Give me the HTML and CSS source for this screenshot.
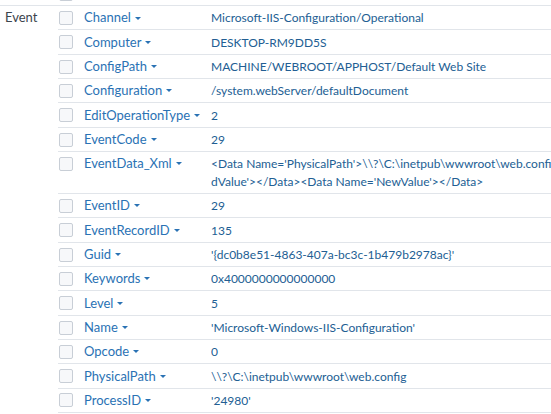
FILE: index.html
```html
<!DOCTYPE html>
<html>
<head>
<meta charset="utf-8">
<link rel="stylesheet" href="styles.css">
</head>
<body>
<div class="fields">
  <div class="group group-prev">
    <div class="group-label"></div>
    <div class="rows">
      <div class="row"><span class="cb"></span><span class="name">Keywords<i class="caret"></i></span><span class="val"></span></div>
    </div>
  </div>
  <div class="group">
    <div class="group-label">Event</div>
    <div class="rows">
      <div class="row"><span class="cb"></span><span class="name">Channel<i class="caret"></i></span><span class="val">Microsoft-IIS-Configuration/Operational</span></div>
      <div class="row"><span class="cb"></span><span class="name">Computer<i class="caret"></i></span><span class="val">DESKTOP-RM9DD5S</span></div>
      <div class="row"><span class="cb"></span><span class="name">ConfigPath<i class="caret"></i></span><span class="val">MACHINE/WEBROOT/APPHOST/Default Web Site</span></div>
      <div class="row"><span class="cb"></span><span class="name">Configuration<i class="caret"></i></span><span class="val">/system.webServer/defaultDocument</span></div>
      <div class="row"><span class="cb"></span><span class="name">EditOperationType<i class="caret"></i></span><span class="val">2</span></div>
      <div class="row"><span class="cb"></span><span class="name">EventCode<i class="caret"></i></span><span class="val">29</span></div>
      <div class="row"><span class="cb"></span><span class="name">EventData_Xml<i class="caret"></i></span><span class="val val-wrap"><span class="line">&lt;Data Name='PhysicalPath'&gt;\\?\C:\inetpub\wwwroot\web.config&lt;/Data&gt;&lt;Data Name='ConfigPath'&gt;MACHINE/WEBROOT/APPHOST/Default Web Site&lt;/Data&gt;&lt;Data Name='Ol</span><span class="line">dValue'&gt;&lt;/Data&gt;&lt;Data Name='NewValue'&gt;&lt;/Data&gt;</span></span></div>
      <div class="row"><span class="cb"></span><span class="name">EventID<i class="caret"></i></span><span class="val">29</span></div>
      <div class="row"><span class="cb"></span><span class="name">EventRecordID<i class="caret"></i></span><span class="val">135</span></div>
      <div class="row"><span class="cb"></span><span class="name">Guid<i class="caret"></i></span><span class="val">'{dc0b8e51-4863-407a-bc3c-1b479b2978ac}'</span></div>
      <div class="row"><span class="cb"></span><span class="name">Keywords<i class="caret"></i></span><span class="val">0x4000000000000000</span></div>
      <div class="row"><span class="cb"></span><span class="name">Level<i class="caret"></i></span><span class="val">5</span></div>
      <div class="row"><span class="cb"></span><span class="name">Name<i class="caret"></i></span><span class="val">'Microsoft-Windows-IIS-Configuration'</span></div>
      <div class="row"><span class="cb"></span><span class="name">Opcode<i class="caret"></i></span><span class="val">0</span></div>
      <div class="row"><span class="cb"></span><span class="name">PhysicalPath<i class="caret"></i></span><span class="val">\\?\C:\inetpub\wwwroot\web.config</span></div>
      <div class="row"><span class="cb"></span><span class="name">ProcessID<i class="caret"></i></span><span class="val">'24980'</span></div>
    </div>
  </div>
</div>
</body>
</html>
```

FILE: styles.css
```css
html, body {
  margin: 0;
  padding: 0;
  overflow: hidden;
  background: #ffffff;
}

body {
  font-family: Lato, "Open Sans", "Liberation Sans", sans-serif;
  font-size: 13px;
  color: #3c444d;
  width: 551px;
  height: 414px;
}

.fields {
  margin-top: -18.33px;
  width: 551px;
}

.group {
  display: flex;
  border-top: 1px solid #e1e5ea;
}

.group-prev {
  border-top: none;
}

.group-label {
  width: 58px;
  flex: none;
  padding: 3.3px 0 0 5px;
  box-sizing: border-box;
  line-height: 17.67px;
  color: #3c444d;
}

.rows {
  flex: 1;
  min-width: 0;
}

.row {
  display: grid;
  grid-template-columns: 26px 127px minmax(0, 1fr);
  border-bottom: 1px solid #e1e5ea;
  padding: 3.3px 0 2.36px;
  line-height: 17.67px;
}

.group-prev .row {
  border-bottom: none;
}

.cb {
  width: 14px;
  height: 14px;
  box-sizing: border-box;
  margin: 1.6px 0 0 1px;
  border: 1px solid #c8ced6;
  border-radius: 2px;
  background: #f7f8fa;
}

.name {
  color: #2a72b4;
  white-space: nowrap;
}

.caret {
  display: inline-block;
  width: 0;
  height: 0;
  margin-left: 4px;
  vertical-align: middle;
  border-left: 3px solid transparent;
  border-right: 3px solid transparent;
  border-top: 3.5px solid #2a72b4;
  position: relative;
  top: -1px;
}

.val {
  color: #225e93;
  font-size: 12px;
  white-space: nowrap;
  overflow: hidden;
}

.val-wrap .line {
  display: block;
  white-space: nowrap;
}
```
